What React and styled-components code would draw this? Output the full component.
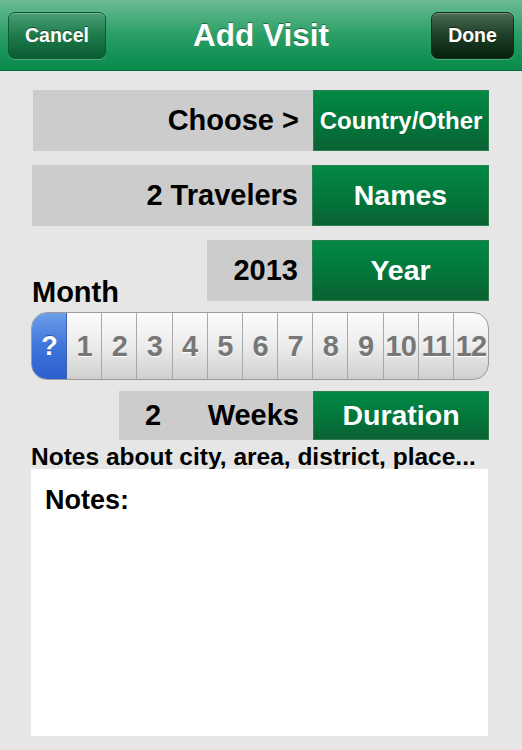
import React from 'react';
import styled, { createGlobalStyle } from 'styled-components';

const GlobalStyle = createGlobalStyle`
  html, body {
    margin: 0;
    padding: 0;
    background: #e6e6e6;
  }
  body {
    font-family: "Liberation Sans", Arial, Helvetica, sans-serif;
    font-weight: bold;
  }
`

const Screen = styled.div`
  width: 522px;
  height: 750px;
  background: #e6e6e6;
  overflow: hidden;
`

const NavBar = styled.div`
  height: 70px;
  border-bottom: 1px solid #08693a;
  background: linear-gradient(#6bbb94, #2a9f65 50%, #078a4b);
  display: flex;
  align-items: center;
  justify-content: space-between;
  padding: 0 8px;
  position: relative;
`

const NavButton = styled.button`
  height: 47px;
  width: ${p => p.width}px;
  margin-top: 1px;
  border-radius: 7px;
  border: 1px solid ${p => (p.dark ? '#10301a' : '#0c5a31')};
  background: ${p => (p.dark
    ? 'linear-gradient(#4b6b55, #1d3d26 50%, #06220e)'
    : 'linear-gradient(#4aa077, #1d7a4a 50%, #0a5d33)')};
  box-shadow: inset 0 1px 0 rgba(255, 255, 255, 0.25), 0 1px 0 rgba(255, 255, 255, 0.25);
  color: #fff;
  font-family: inherit;
  font-weight: bold;
  font-size: 19.5px;
  text-shadow: 0 -1px 0 rgba(0, 0, 0, 0.45);
  padding: 0;
`

const Title = styled.div`
  position: absolute;
  left: 0;
  right: 0;
  top: 0;
  height: 70px;
  line-height: 70px;
  text-align: center;
  color: #fff;
  font-size: 31.5px;
  text-shadow: 0 -1px 0 rgba(0, 0, 0, 0.4);
  pointer-events: none;
`

const Content = styled.div`
  padding: 19px 33px 0 31px;
  display: flex;
  flex-direction: column;
`

const Row = styled.div`
  display: flex;
  justify-content: flex-end;
  align-items: ${p => (p.bottom ? 'flex-end' : 'stretch')};
  margin-top: ${p => p.top || 0}px;
`

const Pair = styled.div`
  display: flex;
  height: ${p => p.height || 61}px;
`

const GrayCell = styled.div`
  width: ${p => p.width}px;
  background: #cccccc;
  color: #000;
  font-size: 29px;
  display: flex;
  align-items: center;
  justify-content: ${p => (p.spread ? 'space-between' : 'flex-end')};
  padding: 0 14px 0 ${p => p.left || 0}px;
  box-sizing: border-box;
`

const GreenCell = styled.div`
  width: ${p => p.width || 176}px;
  background: linear-gradient(#028945, #02763b 55%, #0b6132);
  color: #fff;
  font-size: ${p => p.size || 28.5}px;
  display: flex;
  align-items: center;
  justify-content: center;
  box-sizing: border-box;
  border: 1px solid #2a7f4f;
`

const MonthLabel = styled.div`
  margin-right: auto;
  margin-bottom: -5px;
  font-size: 29px;
  line-height: 28px;
  color: #000;
  padding-left: 1px;
`

const Segments = styled.div`
  margin-top: 11px;
  height: 68px;
  display: flex;
  border: 1px solid #9c9c9c;
  border-radius: 16px;
  overflow: hidden;
  box-sizing: border-box;
  background: linear-gradient(#fcfcfc, #ececec 50%, #cfcfcf);
`

const Segment = styled.div`
  flex: ${p => (p.selected ? '0 0 34px' : '1 1 0')};
  display: flex;
  align-items: center;
  justify-content: center;
  font-size: ${p => (p.selected ? 27 : 29)}px;
  letter-spacing: -1px;
  color: ${p => (p.selected ? '#fff' : '#777')};
  text-shadow: ${p => (p.selected ? '0 -1px 0 rgba(0,0,0,0.35)' : '0 1px 0 #fff')};
  border-left: ${p => (p.selected ? 'none' : '1px solid #a8a8a8')};
  background: ${p => (p.selected
    ? 'linear-gradient(#6d9ee9, #3f75dc 50%, #2b5fcd)'
    : 'transparent')};
  &:nth-child(2) {
    border-left-color: #3d63b0;
  }
`

const NotesLabel = styled.div`
  margin-top: 5px;
  font-size: 24.5px;
  line-height: 23px;
  color: #000;
  white-space: nowrap;
`

const NotesBox = styled.div`
  margin-top: 1px;
  margin-right: 1px;
  height: 267px;
  background: #fff;
  padding: 16px 14px;
  box-sizing: border-box;
  font-size: 27px;
  color: #000;
`

const months = ['1', '2', '3', '4', '5', '6', '7', '8', '9', '10', '11', '12'];

export default function App() {
  return (
    <Screen>
      <GlobalStyle />
      <NavBar>
        <NavButton width={98}>Cancel</NavButton>
        <Title>Add Visit</Title>
        <NavButton width={83} dark>Done</NavButton>
      </NavBar>

      <Content>
        <Row>
          <Pair>
            <GrayCell width={280}>Choose &gt;</GrayCell>
            <GreenCell size={24}>Country/Other</GreenCell>
          </Pair>
        </Row>

        <Row top={14}>
          <Pair>
            <GrayCell width={280}>2 Travelers</GrayCell>
            <GreenCell width={177}>Names</GreenCell>
          </Pair>
        </Row>

        <Row top={14} bottom>
          <MonthLabel>Month</MonthLabel>
          <Pair>
            <GrayCell width={105}>2013</GrayCell>
            <GreenCell width={177}>Year</GreenCell>
          </Pair>
        </Row>

        <Segments>
          <Segment selected>?</Segment>
          {months.map(m => (
            <Segment key={m}>{m}</Segment>
          ))}
        </Segments>

        <Row top={11}>
          <Pair height={49}>
            <GrayCell width={194} left={26} spread>
              <span>2</span>
              <span>Weeks</span>
            </GrayCell>
            <GreenCell>Duration</GreenCell>
          </Pair>
        </Row>

        <NotesLabel>Notes about city, area, district, place...</NotesLabel>
        <NotesBox>Notes:</NotesBox>
      </Content>
    </Screen>
  );
}
